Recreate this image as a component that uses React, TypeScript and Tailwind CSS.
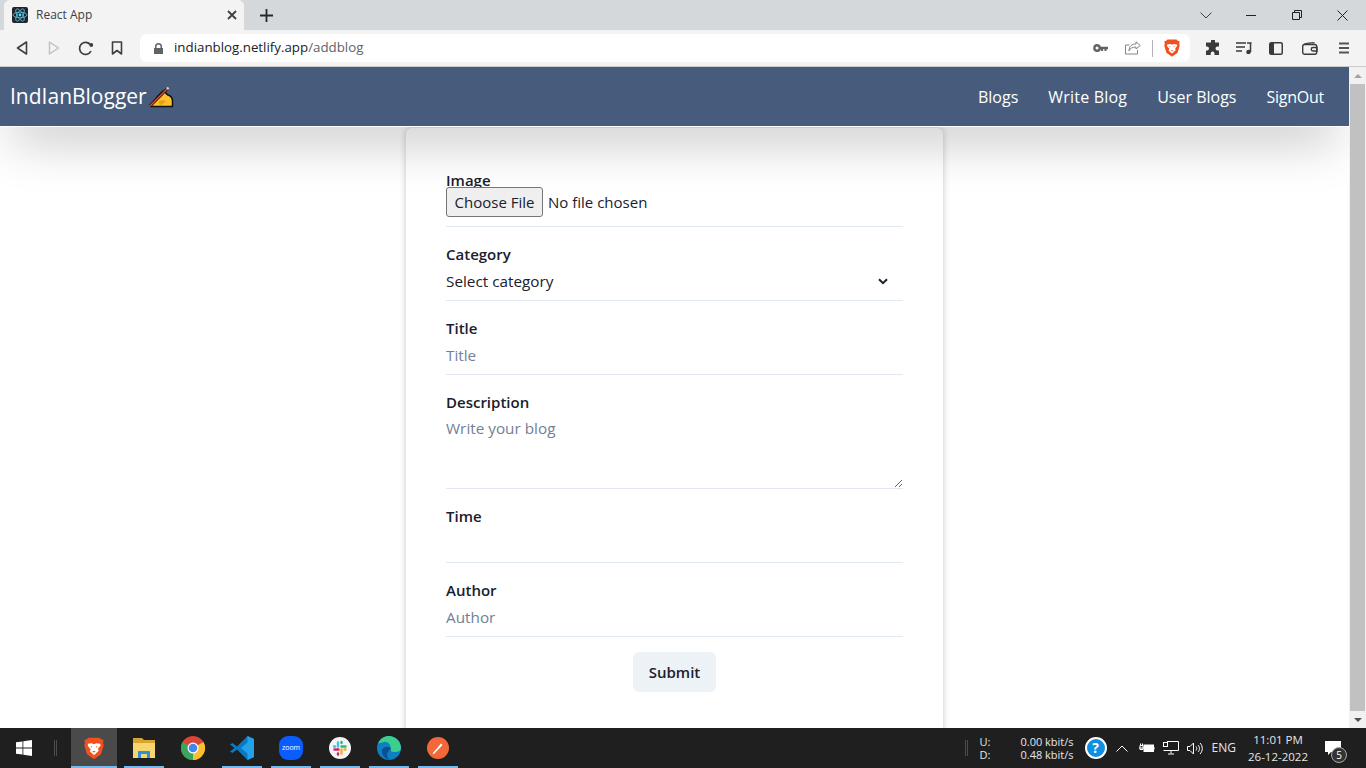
const font = "font-['Open_Sans',sans-serif]";

const ReactLogo = () => (
  <svg width="16" height="16" viewBox="0 0 16 16" className="rounded-[2px] bg-[#20232a]">
    <g fill="none" stroke="#61dafb" strokeWidth="0.7">
      <ellipse cx="8" cy="8" rx="7" ry="2.8" />
      <ellipse cx="8" cy="8" rx="7" ry="2.8" transform="rotate(60 8 8)" />
      <ellipse cx="8" cy="8" rx="7" ry="2.8" transform="rotate(120 8 8)" />
    </g>
    <circle cx="8" cy="8" r="1.4" fill="#61dafb" />
  </svg>
);

const BraveLogo = ({ size = 18 }: { size?: number }) => (
  <svg width={size} height={size * 1.12} viewBox="0 0 18 20">
    <path d="M4 .5h10L15.500 2 17.500 2.500 17.200 6l.5 1.500-2.400 8L9 20l-6.300-4.500L.3 7.500.8 6 .5 2.500 2.500 2z" fill="#f1501f" />
    <path d="M3.500 6 7 5.500 9 6.500l2-1 3.500.5.500 1.500-2.500 3 .8 1.800L9.500 16h-1L5.200 12.800 6 11 3.500 8z" fill="#fff" />
    <path d="M7.200 8.500 5.500 8l1.700 1.500zM10.800 8.500l1.700-.5-1.700 1.500z" fill="#f1501f" />
    <path d="M7.500 12.500h3L9 14z" fill="#f1501f" />
  </svg>
);

const BrowserIcons = {
  back: (
    <svg width="14" height="16" viewBox="0 0 14 16" fill="none" stroke="#3c4043" strokeWidth="1.6" strokeLinejoin="round">
      <path d="M11.500 2 2.500 8l9 6z" />
    </svg>
  ),
  forward: (
    <svg width="14" height="16" viewBox="0 0 14 16" fill="none" stroke="#bdc1c6" strokeWidth="1.4" strokeLinejoin="round">
      <path d="M2.500 2l9 6-9 6z" />
    </svg>
  ),
  reload: (
    <svg width="16" height="16" viewBox="0 0 16 16" fill="none">
      <path d="M13 11a6 6 0 1 1-.5-6" stroke="#3c4043" strokeWidth="1.7" />
      <circle cx="13.300" cy="5" r="1.900" fill="#3c4043" />
    </svg>
  ),
  bookmark: (
    <svg width="12" height="14" viewBox="0 0 12 14" fill="none" stroke="#3c4043" strokeWidth="1.6" strokeLinejoin="round">
      <path d="M1.500 1h9v12L6 9.500 1.500 13z" />
    </svg>
  ),
};

const WritingHand = () => (
  <svg width="26" height="22" viewBox="0 0 26 22">
    <path d="M3 20.500C4 16 8 13 10 10l5-5c2 0 3 3 5 4 3 1 4.500 3 4.500 6v5.500z" fill="#fdc02f" stroke="#111" strokeWidth="1.500" strokeLinejoin="round" />
    <path d="M11 15c2-1 5-1 7 0l-4 4-3-1z" fill="#e3a01b" />
    <path d="M2 20 19 3" stroke="#111" strokeWidth="3" />
    <path d="M2 20 19 3" stroke="#ef4a2a" strokeWidth="1.500" />
    <path d="m19 3 1.500-1.500" stroke="#f3c9bd" strokeWidth="2.400" />
  </svg>
);

const Chevron = () => (
  <svg width="10" height="7" viewBox="0 0 10 7" fill="none" stroke="#1a202c" strokeWidth="2">
    <path d="m1 1.200 4 4 4-4" />
  </svg>
);

const Field = ({ label, children }: { label: string; children: React.ReactNode }) => (
  <div className="flex flex-col">
    <label className="h-[34px] pt-[17px] text-[15px] leading-[20px] font-semibold text-[#1a202c]">{label}</label>
    {children}
  </div>
);

const inputClass =
  "h-[40px] w-full border-b border-[#e2e8f0] bg-transparent text-[15.300px] text-[#1a202c] outline-none placeholder:text-[#718096]";

const TaskItem = ({
  width,
  active,
  line = true,
  children,
}: {
  width: string;
  active?: boolean;
  line?: boolean;
  children: React.ReactNode;
}) => (
  <div className={`${width} relative flex h-full shrink-0 items-center justify-center ${active ? "bg-[#4a4a4a]" : ""}`}>
    {children}
    {line && <div className="absolute right-0 bottom-0 left-0 h-[2px] bg-[#76b9ed]" />}
  </div>
);

export default function App() {
  return (
    <div className={`${font} flex h-screen w-screen flex-col overflow-hidden bg-white`}>
      {/* browser tabs */}
      <div className="flex h-[30px] shrink-0 items-end bg-[#d5d8db]">
        <div className="ml-[4px] flex h-[30px] w-[240px] items-center rounded-t-[6px] bg-[#f3f3f3] pr-[7px] pl-[8px]">
          <ReactLogo />
          <span className="ml-[8px] flex-1 text-[12px] text-[#3c4043]">React App</span>
          <svg width="10" height="10" viewBox="0 0 10 10" stroke="#3c4043" strokeWidth="1.800">
            <path d="m1 1 8 8M9 1l-8 8" />
          </svg>
        </div>
        <div className="ml-[16px] flex h-[30px] items-center">
          <svg width="13" height="13" viewBox="0 0 13 13" stroke="#26282b" strokeWidth="1.800">
            <path d="M6.500 0v13M0 6.500h13" />
          </svg>
        </div>
        <div className="ml-auto flex h-[30px] items-center">
          <svg width="12" height="7" viewBox="0 0 12 7" fill="none" stroke="#3c4043" className="mr-[34px]">
            <path d="m.5.5 5.500 5.500L11.500.5" />
          </svg>
          <div className="mr-[36px] h-[1px] w-[10px] bg-[#222]" />
          <svg width="10" height="10" viewBox="0 0 10 10" fill="none" stroke="#222" className="mr-[35px]">
            <path d="M.5 2.500h7v7h-7zM2.500 2.500v-2h7v7h-2" />
          </svg>
          <svg width="11" height="11" viewBox="0 0 11 11" stroke="#222" className="mr-[18px]">
            <path d="m.5.500 10 10M10.500.500l-10 10" />
          </svg>
        </div>
      </div>

      {/* browser toolbar */}
      <div className="flex h-[37px] shrink-0 items-center border-b border-[#c8cacc] bg-[#f3f3f3]">
        <div className="ml-[15px] flex w-[125px] items-center">
          <div className="w-[32px]">{BrowserIcons.back}</div>
          <div className="w-[31px]">{BrowserIcons.forward}</div>
          <div className="w-[33px]">{BrowserIcons.reload}</div>
          <div>{BrowserIcons.bookmark}</div>
        </div>
        <div className="flex h-[28px] w-[1050px] items-center rounded-[7px] bg-white pr-[10px] pl-[14px]">
          <svg width="9" height="11" viewBox="0 0 9 11" fill="#5f6368">
            <path d="M1 5V3.500a3.500 3.500 0 0 1 7 0V5h1v6H0V5zm1.500 0h4V3.500a2 2 0 0 0-4 0z" />
          </svg>
          <span className="ml-[11px] flex-1 text-[13.300px] text-[#202124]">
            indianblog.netlify.app<span className="text-[#5f6368]">/addblog</span>
          </span>
          <svg width="15" height="8" viewBox="0 0 15 8" fill="#5f6368">
            <path d="M4 0a4 4 0 0 1 3.800 2.800H15v2.400h-1.500V7h-2V5.200H10V7H8V5.200A4 4 0 1 1 4 0zm0 2.500a1.500 1.500 0 1 0 0 3 1.500 1.500 0 0 0 0-3z" />
          </svg>
          <svg width="16" height="14" viewBox="0 0 16 14" fill="none" stroke="#80868b" strokeWidth="1" className="ml-[17px]">
            <path d="M11 .8 15.300 4.500 11 8V6C7 6 5 7.500 4 10c0-5 3-7 7-7zM12.500 9v4h-12V4h4" />
          </svg>
          <div className="mr-[11px] ml-[11px] h-[17px] w-[1px] bg-[#b0b3b6]" />
          <BraveLogo size={16} />
        </div>
        <div className="ml-[14px] flex items-center">
          <svg width="16" height="16" viewBox="0 0 16 16" fill="#3a3a3a" className="ml-[1px]">
            <path d="M6 1a2 2 0 0 1 4 0v1.500h4v4h-1.500a2 2 0 0 0 0 4H14V15H9.500v-1.500a1.900 1.900 0 0 0-3.800 0V15H1v-4.500h1a2 2 0 0 0 0-4H1v-4h5z" />
          </svg>
          <svg width="16" height="12" viewBox="0 0 16 12" fill="none" stroke="#3a3a3a" strokeWidth="1.500" className="ml-[15px]">
            <path d="M0 1h10M0 5h9M0 9h6M14.500 1v9" />
            <path d="M11 1h4.500" />
            <circle cx="12.500" cy="10" r="1.500" fill="#3a3a3a" />
          </svg>
          <svg width="14" height="13" viewBox="0 0 14 13" className="ml-[17px]">
            <rect x="0.750" y="0.750" width="12.500" height="11.500" rx="1.500" fill="none" stroke="#3a3a3a" strokeWidth="1.500" />
            <rect x="1" y="1" width="4" height="11" fill="#3a3a3a" />
          </svg>
          <svg width="16" height="13" viewBox="0 0 16 13" fill="none" stroke="#3a3a3a" strokeWidth="1.400" className="ml-[19px]">
            <rect x="0.700" y="2.500" width="14" height="9.800" rx="2" />
            <path d="M2 2.500c1-1.500 9-1.500 10.500-1.800M15 5.500h-4a1.500 1.500 0 0 0 0 3.500h4z" />
          </svg>
          <svg width="12" height="12" viewBox="0 0 12 12" stroke="#555" strokeWidth="1.800" className="ml-[20px]">
            <path d="M1 1.500h10M1 6h10M1 10.500h10" />
          </svg>
        </div>
      </div>

      {/* page + scrollbar */}
      <div className="flex min-h-0 flex-1">
        <div className="flex min-w-0 flex-1 flex-col overflow-hidden">
          <nav className="relative z-10 flex h-[60px] shrink-0 items-center border-b border-white bg-[#475c7d] pr-[25px] pl-[10px] text-white shadow-2xl">
            <span className="text-[21px]">IndIanBlogger</span>
            <span className="ml-[1px]">
              <WritingHand />
            </span>
            <div className="ml-auto flex gap-[30px] text-[16px]">
              <span>Blogs</span>
              <span className="tracking-[0.2px]">Write Blog</span>
              <span>User Blogs</span>
              <span className="tracking-[-0.25px]">SignOut</span>
            </div>
          </nav>

          <div className="flex justify-center pt-[1px]">
            <form className="h-[640px] w-[537px] shrink-0 rounded-md bg-white px-[40px] pt-[25px] shadow-[0_0_7px_rgba(0,0,0,0.22)]">
              <Field label="Image">
                <div className="relative z-10 flex h-[40px] items-start border-b border-[#e2e8f0] text-[15px] text-[#1a202c]">
                  <span className="flex h-[30px] w-[97px] items-center justify-center rounded-[3px] border border-[#767676] bg-[#efefef]">
                    Choose File
                  </span>
                  <span className="ml-[5px] leading-[30px]">No file chosen</span>
                </div>
              </Field>
              <Field label="Category">
                <div className={`${inputClass} flex items-center justify-between pt-[1px] pr-[15px]`}>
                  <span>Select category</span>
                  <Chevron />
                </div>
              </Field>
              <Field label="Title">
                <input className={inputClass} placeholder="Title" />
              </Field>
              <Field label="Description">
                <textarea
                  className="block h-[80px] w-full resize-y border-b border-[#e2e8f0] bg-transparent pt-[7px] text-[15.300px] leading-[24px] outline-none placeholder:text-[#718096]"
                  placeholder="Write your blog"
                />
              </Field>
              <Field label="Time">
                <input className={inputClass} />
              </Field>
              <Field label="Author">
                <input className={inputClass} placeholder="Author" />
              </Field>
              <div className="mt-[15px] flex justify-center">
                <button
                  type="button"
                  className="h-[40px] w-[83px] rounded-md bg-[#edf2f7] text-[15px] font-semibold text-[#1a202c]"
                >
                  Submit
                </button>
              </div>
            </form>
          </div>
        </div>

        <div className="flex w-[17px] shrink-0 flex-col bg-[#f1f1f1]">
          <div className="flex h-[17px] items-center justify-center">
            <div className="h-0 w-0 border-x-[4px] border-b-[4px] border-x-transparent border-b-[#a3a3a3]" />
          </div>
          <div className="mx-[1px] flex-1 bg-[#c1c1c1]" />
          <div className="flex h-[17px] items-center justify-center">
            <div className="h-0 w-0 border-x-[4px] border-t-[4px] border-x-transparent border-t-[#505050]" />
          </div>
        </div>
      </div>

      {/* windows taskbar */}
      <div className="flex h-[40px] shrink-0 items-center bg-[#1f1f1f] text-white">
        <div className="flex w-[50px] shrink-0 justify-center pr-[2px]">
          <svg width="16" height="16" viewBox="0 0 16 16" fill="#fff">
            <path d="M0 2.300 6.500 1.400v6.200H0zM7.300 1.300 16 0v7.600H7.300zM0 8.400h6.500v6.200L0 13.700zM7.300 8.400H16V16l-8.700-1.300z" />
          </svg>
        </div>
        <div className="ml-[4px] h-[16px] w-[3px] shrink-0 border-x border-[#4c4c4c]" />
        <div className="w-[14px] shrink-0" />
        <TaskItem width="w-[46px]" active>
          <BraveLogo size={20} />
        </TaskItem>
        <div className="w-[7px] shrink-0" />
        <TaskItem width="w-[40px]">
          <svg width="22" height="20" viewBox="0 0 22 20">
            <path d="M0 0h9l2 2h11v18H0z" fill="#d9a52e" />
            <path d="M0 5h22v15H0z" fill="#f6d66e" />
            <path d="M5 13h12v7h-3v-4H8v4H5z" fill="#2f8fd8" />
          </svg>
        </TaskItem>
        <div className="w-[9px] shrink-0" />
        <TaskItem width="w-[40px]" line={false}>
          <svg width="24" height="24" viewBox="0 0 24 24">
            <circle cx="12" cy="12" r="12" fill="#db4437" />
            <path d="M12 12 22.400 6A12 12 0 0 1 12 24z" fill="#fbc02d" />
            <path d="M12 12 12 24A12 12 0 0 1 1.600 6z" fill="#3ba55d" />
            <circle cx="12" cy="12" r="5.500" fill="#fff" />
            <circle cx="12" cy="12" r="4.300" fill="#4285f4" />
          </svg>
        </TaskItem>
        <div className="w-[9px] shrink-0" />
        <TaskItem width="w-[40px]">
          <svg width="24" height="24" viewBox="0 0 24 24">
            <path d="M17.500 0 24 3v18l-6.500 3L7 13.500 2.500 17 0 15.500 4.500 12 0 8.500 2.500 7 7 10.500z" fill="#0a78c2" />
            <path d="M17.500 0 24 3v18l-6.500 3zM17.500 6.500 11 12l6.500 5.500z" fill="#22a2ea" fillRule="evenodd" />
          </svg>
        </TaskItem>
        <div className="w-[9px] shrink-0" />
        <TaskItem width="w-[40px]">
          <div className="flex h-[24px] w-[24px] items-center justify-center rounded-[9px] bg-[#0b5cff] text-[7px] text-white">
            zoom
          </div>
        </TaskItem>
        <div className="w-[9px] shrink-0" />
        <TaskItem width="w-[40px]">
          <svg width="22" height="22" viewBox="0 0 22 22">
            <circle cx="11" cy="11" r="11" fill="#f4f4f4" />
            <g strokeWidth="2.400" strokeLinecap="round">
              <path d="M9 5.500v4M5 9.500h1" stroke="#36c5f0" />
              <path d="M16.500 9.500h-4M12.500 5v1" stroke="#2eb67d" />
              <path d="M12.500 16.500v-4M16.500 12.500h-1" stroke="#ecb22e" />
              <path d="M5.500 12.500h4M9 16.500v1" stroke="#e01e5a" />
            </g>
          </svg>
        </TaskItem>
        <div className="w-[9px] shrink-0" />
        <TaskItem width="w-[40px]">
          <svg width="24" height="24" viewBox="0 0 24 24">
            <circle cx="12" cy="12" r="12" fill="#0f7fc4" />
            <path d="M1 8C3 2 8 0 12 0c6 0 12 5 12 12 0 3-3 4-6 4-4 0-5-1.500-4-3 0-5-4-8-7-7-3 .500-5 1-6 2z" fill="#3ccf8c" />
            <path d="M14 13c-2-3-7-3-9 1-1 4 3 9 8 10-4-3-4-8 1-11z" fill="#0a4f8e" />
          </svg>
        </TaskItem>
        <div className="w-[9px] shrink-0" />
        <TaskItem width="w-[40px]">
          <svg width="22" height="22" viewBox="0 0 22 22">
            <circle cx="11" cy="11" r="11" fill="#f2683a" />
            <path d="M5.500 16.500 14 6.500l1.500 1.500-8.500 9z" fill="#fff" />
          </svg>
        </TaskItem>

        {/* tray */}
        <div className="ml-auto flex h-full items-center">
          <div className="h-[16px] w-[3px] border-x border-[#4c4c4c]" />
          <div className="ml-[12px] flex w-[94px] justify-between text-[11px] leading-[13px] text-[#e6e6e6]">
            <div>
              <div>U:</div>
              <div>D:</div>
            </div>
            <div className="text-right">
              <div>0.00 kbit/s</div>
              <div>0.48 kbit/s</div>
            </div>
          </div>
          <div className="ml-[11px] flex h-[22px] w-[22px] items-center justify-center rounded-full border-2 border-white bg-[#0f8fe0] text-[14px] leading-none font-bold text-white">
            ?
          </div>
          <svg width="12" height="7" viewBox="0 0 12 7" fill="none" stroke="#fff" className="ml-[9px]">
            <path d="m.5 6.500 5.500-5.500 5.500 5.500" />
          </svg>
          <svg width="16" height="10" viewBox="0 0 16 10" fill="none" stroke="#fff" className="ml-[11px]">
            <rect x="5" y="2" width="9.500" height="6.500" fill="#fff" />
            <path d="M15 4v2.500M0 5h5M1 2.500h3v4H1zM1.500.500v2M3.500.500v2" />
          </svg>
          <svg width="16" height="14" viewBox="0 0 16 14" fill="none" stroke="#fff" className="ml-[8px]">
            <path d="M4 .5h11.500v9H.5M8 9.500v3M5 13h6" />
            <rect x=".5" y="1.500" width="4" height="4" fill="#1f1f1f" />
          </svg>
          <svg width="16" height="13" viewBox="0 0 16 13" fill="none" stroke="#fff" className="ml-[8px]">
            <path d="M.5 4.500h2.500L6.500 1v11L3 8.500H.5zM9 4.500c1 1 1 3 0 4M11 3c2 2 2 5 0 7M13 1c3 3 3 8 0 11" />
          </svg>
          <span className="ml-[9px] text-[12px] text-[#e6e6e6]">ENG</span>
          <div className="ml-[12px] flex w-[60px] flex-col items-center text-[11.500px] leading-[17px] whitespace-nowrap text-[#e6e6e6]">
            <span>11:01 PM</span>
            <span>26-12-2022</span>
          </div>
          <div className="relative mr-[25px] ml-[17px]">
            <svg width="16" height="14" viewBox="0 0 16 14" fill="#fff">
              <path d="M0 0h16v11H6l-3 3v-3H0z" />
            </svg>
            <div className="absolute top-[6px] left-[6px] flex h-[16px] w-[16px] items-center justify-center rounded-full border border-[#aaa] bg-[#333] text-[10px] leading-none">
              5
            </div>
          </div>
        </div>
      </div>
    </div>
  );
}
